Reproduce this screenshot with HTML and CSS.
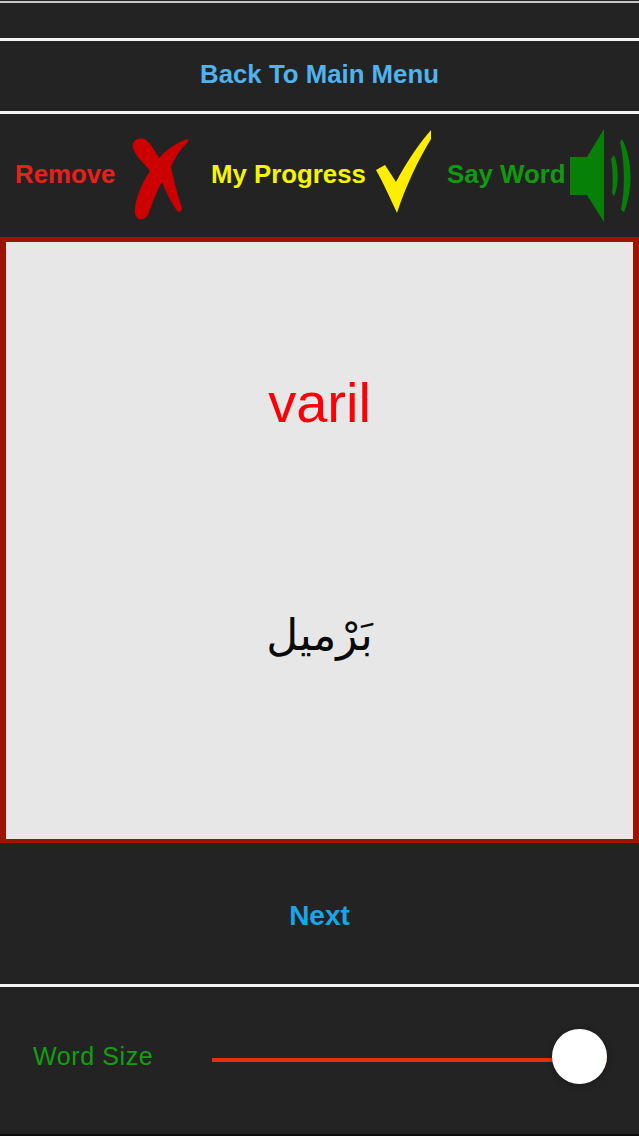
FILE: index.html
```html
<!DOCTYPE html>
<html lang="en">
<head>
<meta charset="utf-8">
<title>Word Card</title>
<link rel="stylesheet" href="styles.css">
</head>
<body>
<main class="app">
  <div class="strip"></div>
  <div class="menu-row"><a class="menu-link">Back To Main Menu</a></div>
  <div class="toolbar">
    <span class="tool-label remove">Remove</span>
    <svg class="icon icon-x" viewBox="130 114 62 123" aria-hidden="true"><path fill="#cc0000" d="M133,148 C131,140 140,136 146,140 C151,144 155,151 159,158 C166,150 177,142 188,139 C189,140 188,142 186,144 C179,151 175,158 171,167 C174,182 178,196 182,208 C182,212 179,213 177,211 C171,202 166,192 162,182 C156,192 152,205 148,215 C144,221 136,221 135,213 C134,200 142,183 150,171 C144,163 135,156 133,148Z"/></svg>
    <span class="tool-label progress">My Progress</span>
    <svg class="icon icon-check" viewBox="374 114 60 123" aria-hidden="true"><path fill="#ffee00" d="M376,170 L385,165 L396,182 C406,163 418,145 431,130 L431,139 C418,160 405,188 397,213 C390,198 383,182 376,170Z"/></svg>
    <span class="tool-label say">Say Word</span>
    <svg class="icon icon-speaker" viewBox="570 114 62 123" aria-hidden="true"><path fill="#078007" d="M570,157 L587,157 L604,129 L604,222 L587,195 L570,195Z M611,159 L614,155 C619,166 619,186 614,196 L612,193 C613,185 613,168 611,159Z M620,142 L622,139 C633,160 633,190 624,212 L621,210 C625,190 625,162 620,142Z"/></svg>
  </div>
  <section class="card">
    <p class="word">varil</p>
    <p class="translation" lang="ar" dir="rtl">بَرْميل</p>
  </section>
  <div class="next-row"><a class="next-link">Next</a></div>
  <div class="size-row">
    <span class="size-label">Word Size</span>
    <div class="slider">
      <div class="slider-track"></div>
      <div class="slider-thumb"></div>
    </div>
  </div>
</main>
</body>
</html>
```

FILE: styles.css
```css
* { box-sizing: border-box; }
html, body { margin: 0; padding: 0; }
body { background: #242324; font-family: "Liberation Sans", Arial, sans-serif; }
.app { width: 639px; height: 1136px; display: flex; flex-direction: column; overflow: hidden; }
.strip { height: 38px; margin-top: 1px; margin-bottom: -1px; border-top: 2px solid #c8c8c8; flex: none; }
.menu-row { height: 73px; flex: none; border-top: 3px solid #f4f4f4; display: flex; align-items: center; justify-content: center; padding-bottom: 4px; }
.menu-link { font-size: 25.8px; font-weight: 700; color: #4fb3ee; }
.toolbar { height: 126px; flex: none; border-top: 3px solid #f4f4f4; display: flex; align-items: center; padding-left: 15px; }
.tool-label { font-size: 25.8px; font-weight: 700; white-space: nowrap; padding-bottom: 2px; }
.remove { color: #e8201a; width: 115px; }
.progress { color: #f5f500; width: 163px; }
.say { color: #0f9a0f; width: 123px; }
.icon { height: 123px; flex: none; display: block; }
.icon-x { width: 62px; margin-right: 19px; }
.icon-check { width: 60px; margin-right: 13px; }
.icon-speaker { width: 62px; }
.card { height: 606px; flex: none; background: #e8e7e8; border: solid #a01200; border-width: 5px 6px 4px; display: flex; flex-direction: column; align-items: center; }
.word { margin: 131px 0 0; font-size: 56px; line-height: 60px; color: #fb0007; }
.translation { margin: 167px 0 0; font-family: "DejaVu Sans", sans-serif; font-size: 44px; line-height: 70px; color: #0a0a0a; }
.next-row { height: 141px; flex: none; display: flex; align-items: center; justify-content: center; padding-top: 4px; }
.next-link { font-size: 28px; font-weight: 700; color: #1aa5e8; }
.size-row { flex: 1; border-top: 3px solid #f4f4f4; border-bottom: 2px solid #0c0c0c; display: flex; align-items: center; padding: 0 32px 8px 33px; }
.size-label { width: 179px; font-size: 25px; color: #10a010; letter-spacing: 0.6px; flex: none; }
.slider { position: relative; flex: 1; height: 55px; display: flex; align-items: center; }
.slider-track { width: 100%; height: 4px; margin-top: 6px; background: #e8300c; }
.slider-thumb { position: absolute; right: 0; top: 0; width: 55px; height: 55px; border-radius: 50%; background: #fff; box-shadow: 0 1px 6px rgba(0,0,0,.3); }
```
